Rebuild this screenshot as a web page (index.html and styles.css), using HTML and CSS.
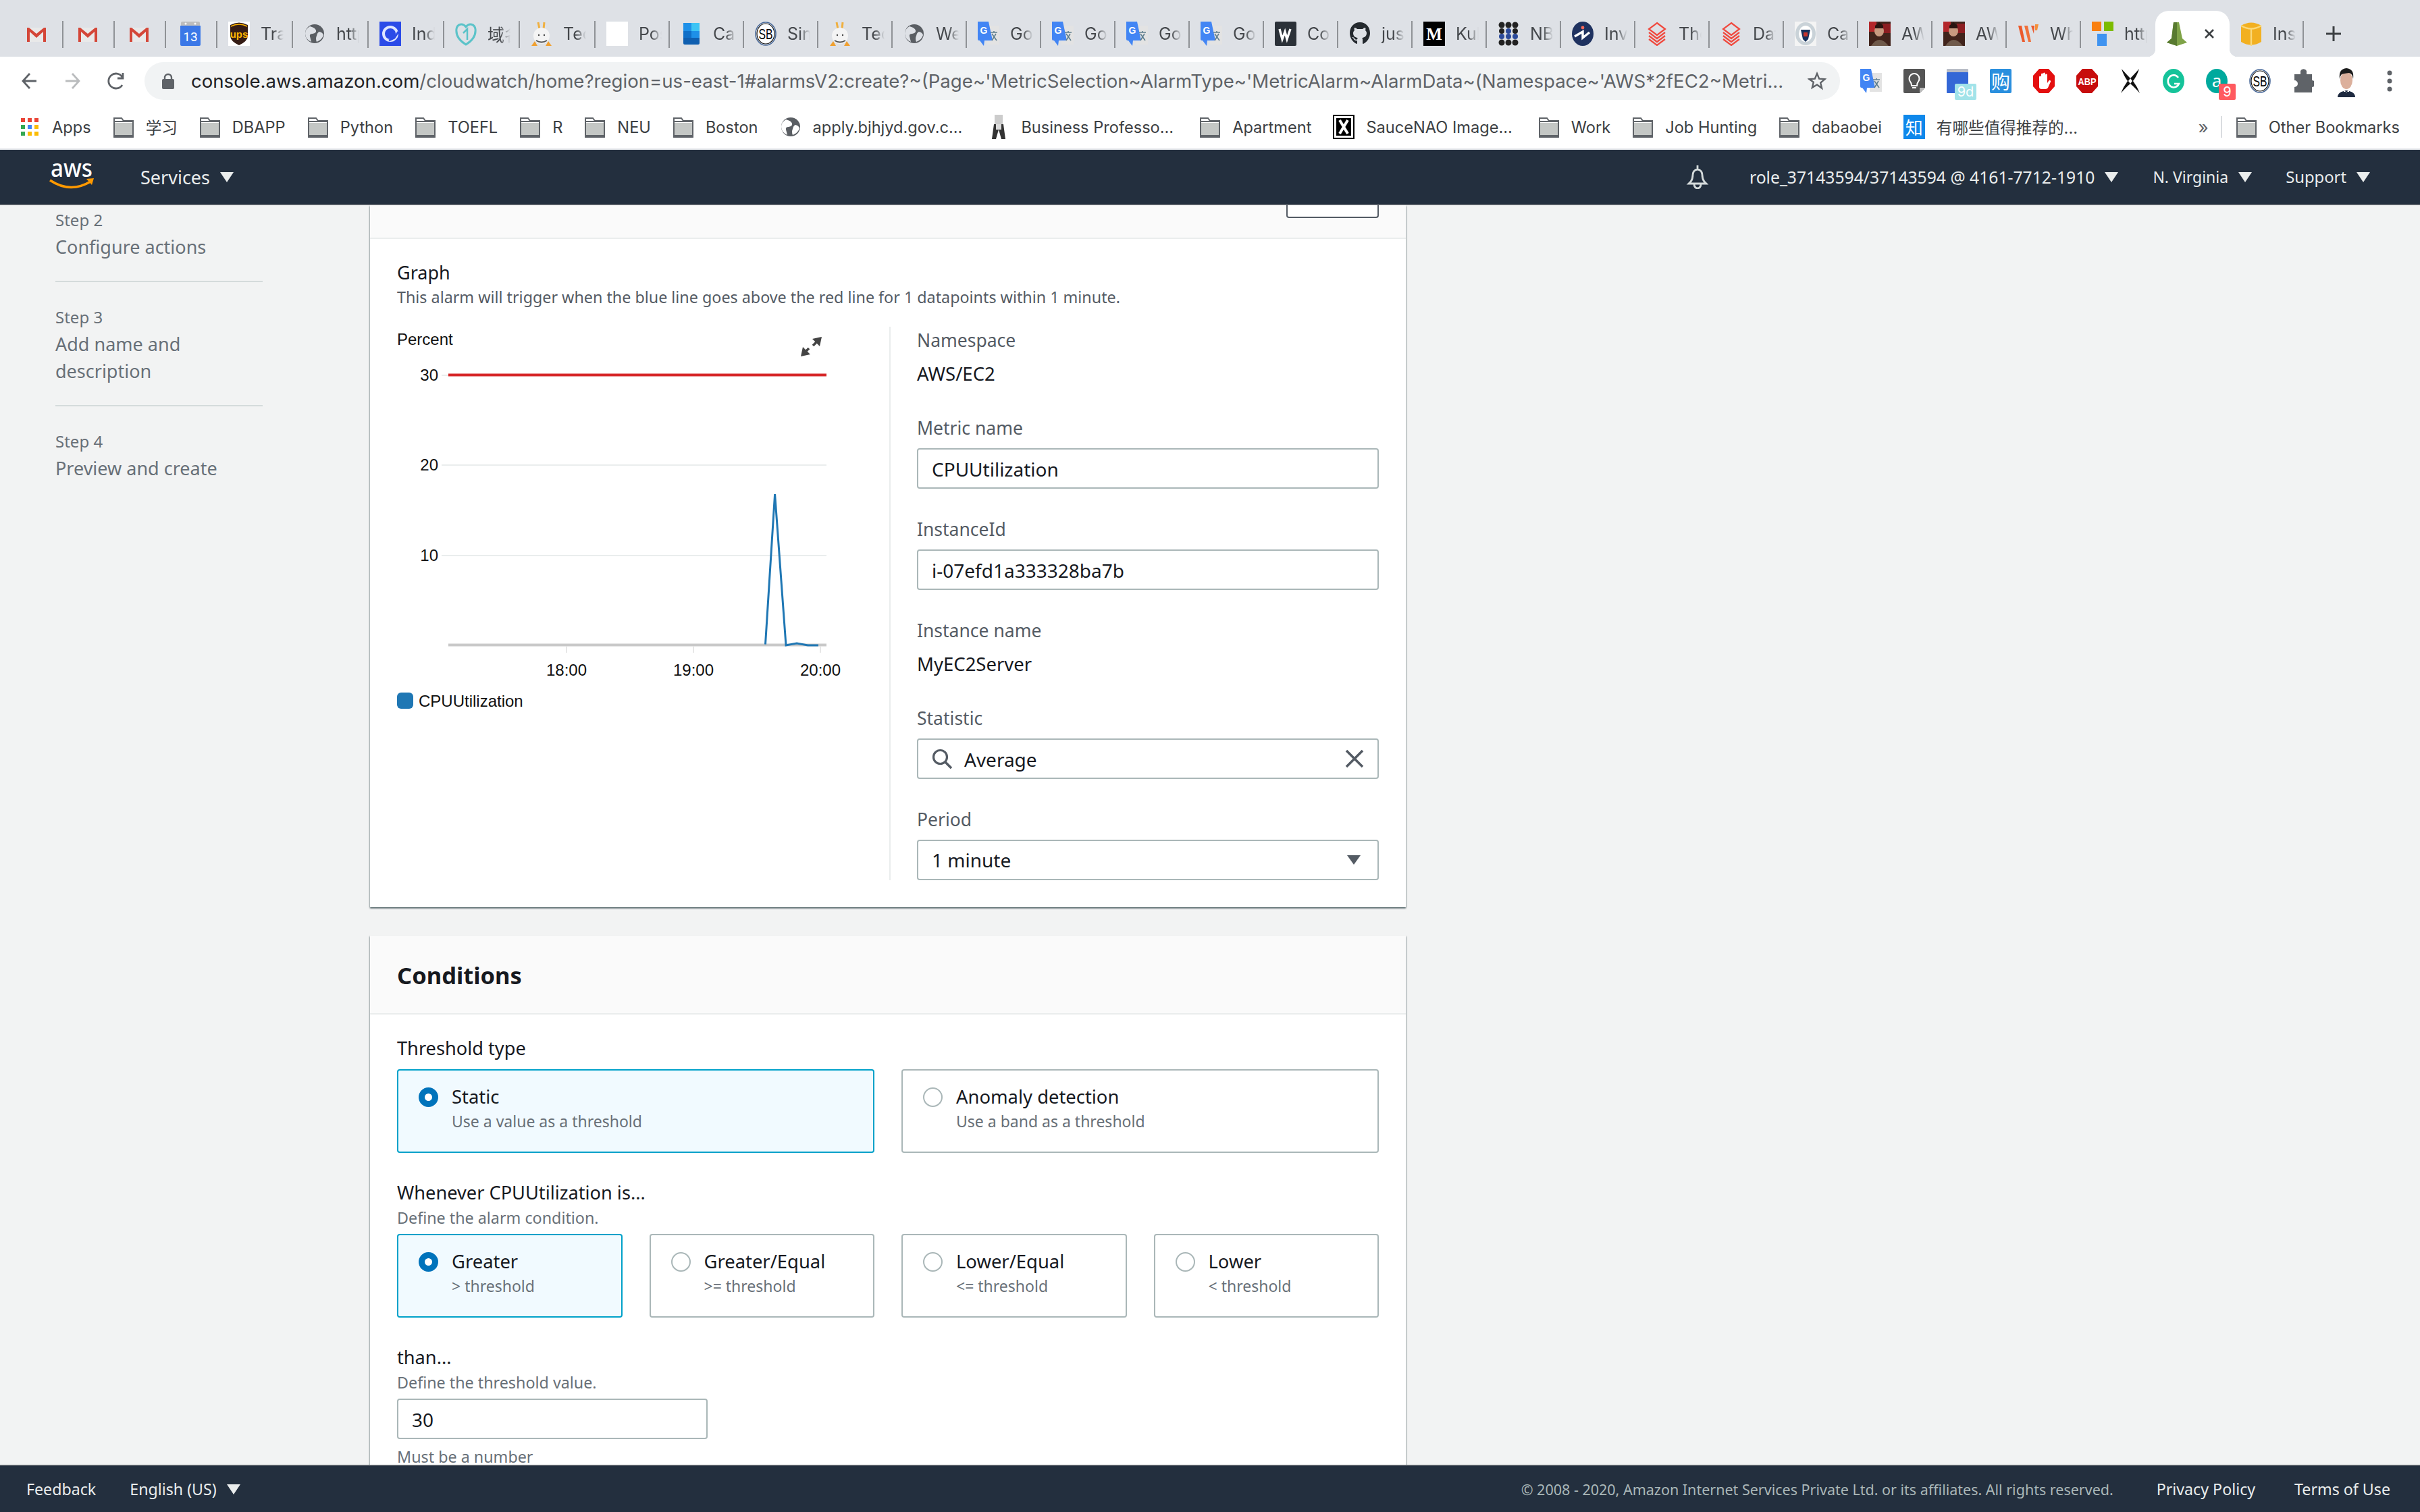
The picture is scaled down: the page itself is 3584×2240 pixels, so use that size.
FILE: index.html
```html
<!DOCTYPE html>
<html lang="en">
<head>
<meta charset="utf-8">
<title>CloudWatch</title>
<link rel="stylesheet" href="styles.css">
</head>
<body>
<svg class="defs" width="0" height="0">
  <symbol id="gmail" viewBox="0 0 32 32"><path d="M2 7h28v21H2z" fill="#e9e9e9"/><path d="M2 28V7h3l11 9 11-9h3v21h-4V13L16 22 6 13v15z" fill="#d44638"/></symbol>
  <symbol id="cal" viewBox="0 0 32 36"><rect x="2" y="0" width="28" height="8" rx="2" fill="#bdbdbd"/><path d="M1 6h30v28a2 2 0 0 1-2 2H3a2 2 0 0 1-2-2z" fill="#3b78e7"/><circle cx="9" cy="3" r="1.5" fill="#fff"/><circle cx="23" cy="3" r="1.5" fill="#fff"/><text x="16" y="29" font-size="19" text-anchor="middle" fill="#fff" font-family="Roboto">13</text></symbol>
  <symbol id="ups" viewBox="0 0 32 36"><rect width="32" height="36" fill="#fff"/><path d="M3 5q13-7 26 0v16q0 8-13 14Q3 29 3 21z" fill="#351c15"/><path d="M4 7q12-6 24 0" stroke="#ffb500" stroke-width="1.5" fill="none"/><text x="16" y="24" font-size="15" font-weight="700" text-anchor="middle" fill="#ffb500" font-family="Liberation Sans">ups</text></symbol>
  <symbol id="globe" viewBox="0 0 32 32"><circle cx="16" cy="16" r="14" fill="#5a5e63"/><path d="M9 5q8 2 9 6t-5 5q-5 0-4 4l2 8q-9-4-9-12 0-7 7-11zM23 13q5 1 6 5-2 7-10 10-2-5 0-9 1-5 4-6z" fill="#dee1e6"/></symbol>
  <symbol id="globew" viewBox="0 0 32 32"><circle cx="16" cy="16" r="14" fill="#5a5e63"/><path d="M9 5q8 2 9 6t-5 5q-5 0-4 4l2 8q-9-4-9-12 0-7 7-11zM23 13q5 1 6 5-2 7-10 10-2-5 0-9 1-5 4-6z" fill="#fff"/></symbol>
  <symbol id="index" viewBox="0 0 32 36"><rect width="32" height="36" fill="#2b4be8"/><circle cx="16" cy="18" r="10" fill="none" stroke="#dfe6ff" stroke-width="4"/><path d="M14 28l8-4 6-9" stroke="#2b4be8" stroke-width="3" fill="none"/></symbol>
  <symbol id="heart" viewBox="0 0 32 36"><path d="M16 34C6 28 1 20 2 11 3 4 11 1 16 8c5-7 13-4 14 3 1 9-4 17-14 23z" fill="none" stroke="#5cc3c9" stroke-width="3"/><path d="M12 17l6-6v16" fill="none" stroke="#5cc3c9" stroke-width="2.5"/></symbol>
  <symbol id="rabbit" viewBox="0 0 32 36"><path d="M11 1l2 10M20 1l-1 10" stroke="#f0b040" stroke-width="3"/><ellipse cx="16" cy="21" rx="12" ry="12" fill="#f4f4f4"/><path d="M1 36l5-7 4 7zM31 36l-5-7-4 7z" fill="#f0a030"/><path d="M8 28q8 5 16 0" stroke="#555" stroke-width="2" fill="none"/><circle cx="12" cy="20" r="1.2" fill="#444"/><circle cx="20" cy="20" r="1.2" fill="#444"/></symbol>
  <symbol id="blank" viewBox="0 0 32 36"><rect width="32" height="36" fill="#fff"/></symbol>
  <symbol id="office" viewBox="0 0 32 36"><rect x="4" y="2" width="24" height="32" rx="2" fill="#0f5fb0"/><rect x="4" y="2" width="12" height="12" fill="#1e90e8"/><rect x="16" y="2" width="12" height="12" fill="#3ec4f4"/><rect x="16" y="14" width="12" height="10" fill="#1e90e8"/><rect x="4" y="14" width="12" height="10" fill="#0f6fc8"/></symbol>
  <symbol id="sb" viewBox="0 0 32 36"><ellipse cx="16" cy="18" rx="15" ry="17" fill="#fff" stroke="#4a6a9a" stroke-width="1.6"/><ellipse cx="16" cy="18" rx="13" ry="15" fill="none" stroke="#111" stroke-width="1.2"/><text x="16" y="26" font-size="22" text-anchor="middle" fill="#000" font-family="Liberation Sans" textLength="21" lengthAdjust="spacingAndGlyphs">SB</text></symbol>
  <symbol id="gtrans" viewBox="0 0 32 36"><path d="M14 6h18v28H14z" fill="#e3e3e3"/><path d="M0 0h16l6 28H10l-1 8-6-8H2a2 2 0 0 1-2-2z" fill="#4285f4"/><text x="9" y="18" font-size="14" font-weight="700" text-anchor="middle" fill="#fff" font-family="Liberation Sans">G</text><path d="M19 16h10M24 14v2M21 28l6-10M21 18l7 10" stroke="#5f7f8f" stroke-width="1.6" fill="none"/></symbol>
  <symbol id="wolf" viewBox="0 0 32 36"><rect width="32" height="36" rx="2" fill="#2b3138"/><path d="M7 11l4 15 4-11 3 11 5-15" fill="none" stroke="#fff" stroke-width="3.4"/></symbol>
  <symbol id="github" viewBox="0 0 32 36"><path d="M16 1C7 1 1 8 1 17c0 7 4 13 10 16 1 0 1-1 1-1v-4c-4 1-5-2-5-2-1-2-2-2-2-2-1-1 0-1 0-1 2 0 3 2 3 2 1 2 3 2 4 1 0-1 1-2 1-2-3 0-7-2-7-7 0-2 1-3 2-4 0-1-1-2 0-4 0 0 2 0 4 2h8c2-2 4-2 4-2 1 2 0 3 0 4 1 1 2 2 2 4 0 5-4 7-7 7 1 1 1 2 1 3v5s0 1 1 1c6-3 10-9 10-16 0-9-6-16-15-16z" fill="#24292e"/></symbol>
  <symbol id="medium" viewBox="0 0 32 36"><rect width="32" height="36" fill="#000"/><text x="16" y="27" font-size="25" font-weight="700" text-anchor="middle" fill="#fff" font-family="Liberation Serif">M</text></symbol>
  <symbol id="dots" viewBox="0 0 32 36"><g fill="#222"><circle cx="6" cy="5" r="4.5"/><circle cx="16" cy="5" r="4.5"/><circle cx="26" cy="5" r="4.5"/><circle cx="6" cy="31" r="4.5"/><circle cx="16" cy="31" r="4.5"/><circle cx="26" cy="31" r="4.5"/><circle cx="6" cy="14" r="4"/><circle cx="26" cy="14" r="4"/></g><g fill="#2b4a9a"><circle cx="16" cy="14" r="4"/><circle cx="6" cy="22" r="4"/><circle cx="16" cy="22" r="4"/><circle cx="26" cy="22" r="4"/></g></symbol>
  <symbol id="inv" viewBox="0 0 32 36"><ellipse cx="16" cy="18" rx="16" ry="18" fill="#1f3260"/><path d="M4 22l12-7v9l10-8" fill="none" stroke="#fff" stroke-width="3.4"/><circle cx="16" cy="9" r="2.4" fill="#ff6a5a"/></symbol>
  <symbol id="stack" viewBox="0 0 32 36"><g fill="none" stroke="#f0493e" stroke-width="2.2"><path d="M16 2l12 9-12 9-12-9z"/><path d="M4 16l12 9 12-9"/><path d="M4 21l12 9 12-9"/><path d="M4 26l12 9 12-9"/></g></symbol>
  <symbol id="seal" viewBox="0 0 32 36"><rect width="32" height="36" fill="#f4f4f4"/><ellipse cx="16" cy="18" rx="15" ry="17" fill="#c9d2d8"/><ellipse cx="16" cy="18" rx="10" ry="12" fill="#fff"/><path d="M9 12h14l-3 14-4 4-4-4z" fill="#16325c"/><path d="M13 16h6v6h-6z" fill="#c8342c"/></symbol>
  <symbol id="game" viewBox="0 0 32 36"><rect width="32" height="36" fill="#41241c"/><rect width="11" height="15" fill="#b3262a"/><rect x="20" y="3" width="12" height="14" fill="#8c1e22"/><ellipse cx="15" cy="14" rx="7" ry="8" fill="#c79a80"/><path d="M3 36q12-18 26 0z" fill="#6f5a4b"/><path d="M9 6l6-5 6 5v4H9z" fill="#2a1410"/></symbol>
  <symbol id="wh" viewBox="0 0 32 36"><g fill="#ec5a2c"><path d="M1 6h5l5 24h-4z"/><path d="M10 6h5l5 24h-4z" fill="#f0703a"/><path d="M20 6h5l-1 12z"/><path d="M26 4h5l-2 9h-3z" fill="#f58f3a"/></g></symbol>
  <symbol id="ms" viewBox="0 0 32 36"><rect width="14" height="14" fill="#f97f0f"/><rect x="18" width="14" height="14" fill="#7cbb00"/><rect x="8" y="18" width="14" height="18" fill="#3f93f0"/></symbol>
  <symbol id="cw" viewBox="0 0 32 36"><path d="M11 1h8l5 24 7 6-15 5-15-5 7-6z" fill="#7fa348"/><path d="M11 1h5v35L1 31l7-6z" fill="#587a30"/></symbol>
  <symbol id="box" viewBox="0 0 32 36"><path d="M1 6q15-9 30 0v24q-15 9-30 0z" fill="#f2b021"/><path d="M1 6q15 9 30 0M16 11v25" stroke="#fbd97a" stroke-width="2.4" fill="none"/></symbol>
  <symbol id="folder" viewBox="0 0 32 32"><path d="M2 8V3h11l3 4h14v24a1 1 0 0 1-1 1H3a1 1 0 0 1-1-1z" fill="#fff" stroke="#5f6368" stroke-width="2"/><path d="M3 10h26v19H3z" fill="#c4c7c5"/><path d="M2 28h28v4H2z" fill="#5f6368"/><path d="M2 8h28" stroke="#5f6368" stroke-width="2"/></symbol>
  <symbol id="octa" viewBox="0 0 32 36"><path d="M9 0h14l9 10v16l-9 10H9L0 26V10z"/></symbol>
</svg>

<header class="tabstrip">
  <div class="tab pinned"><svg class="fav"><use href="#gmail"/></svg></div>
  <div class="tab pinned"><svg class="fav"><use href="#gmail"/></svg></div>
  <div class="tab pinned"><svg class="fav"><use href="#gmail"/></svg></div>
  <div class="tab pinned"><svg class="fav"><use href="#cal"/></svg></div>
  <div class="tab wide"><svg class="fav"><use href="#ups"/></svg><span class="title">Tracking</span></div>
  <div class="tab wide"><svg class="fav"><use href="#globe"/></svg><span class="title">https</span></div>
  <div class="tab wide"><svg class="fav"><use href="#index"/></svg><span class="title">Index</span></div>
  <div class="tab wide"><svg class="fav"><use href="#heart"/></svg><span class="title">域名注册</span></div>
  <div class="tab wide"><svg class="fav"><use href="#rabbit"/></svg><span class="title">Tech</span></div>
  <div class="tab"><svg class="fav"><use href="#blank"/></svg><span class="title">Post</span></div>
  <div class="tab"><svg class="fav"><use href="#office"/></svg><span class="title">Cal</span></div>
  <div class="tab"><svg class="fav"><use href="#sb"/></svg><span class="title">Single</span></div>
  <div class="tab"><svg class="fav"><use href="#rabbit"/></svg><span class="title">Tech</span></div>
  <div class="tab"><svg class="fav"><use href="#globe"/></svg><span class="title">Web</span></div>
  <div class="tab"><svg class="fav"><use href="#gtrans"/></svg><span class="title">Google</span></div>
  <div class="tab"><svg class="fav"><use href="#gtrans"/></svg><span class="title">Google</span></div>
  <div class="tab"><svg class="fav"><use href="#gtrans"/></svg><span class="title">Google</span></div>
  <div class="tab"><svg class="fav"><use href="#gtrans"/></svg><span class="title">Google</span></div>
  <div class="tab"><svg class="fav"><use href="#wolf"/></svg><span class="title">Code</span></div>
  <div class="tab"><svg class="fav"><use href="#github"/></svg><span class="title">just</span></div>
  <div class="tab"><svg class="fav"><use href="#medium"/></svg><span class="title">Kube</span></div>
  <div class="tab"><svg class="fav"><use href="#dots"/></svg><span class="title">NBA</span></div>
  <div class="tab"><svg class="fav"><use href="#inv"/></svg><span class="title">Invest</span></div>
  <div class="tab"><svg class="fav"><use href="#stack"/></svg><span class="title">The</span></div>
  <div class="tab"><svg class="fav"><use href="#stack"/></svg><span class="title">Data</span></div>
  <div class="tab"><svg class="fav"><use href="#seal"/></svg><span class="title">Case</span></div>
  <div class="tab"><svg class="fav"><use href="#game"/></svg><span class="title">AWS</span></div>
  <div class="tab"><svg class="fav"><use href="#game"/></svg><span class="title">AWS</span></div>
  <div class="tab"><svg class="fav"><use href="#wh"/></svg><span class="title">What</span></div>
  <div class="tab nosep"><svg class="fav"><use href="#ms"/></svg><span class="title">https</span></div>
  <div class="tab active"><svg class="fav"><use href="#cw"/></svg><svg class="tab-close" viewBox="0 0 16 16"><path d="M2 2l12 12M14 2L2 14"/></svg></div>
  <div class="tab"><svg class="fav"><use href="#box"/></svg><span class="title">Inst</span></div>
  <svg class="newtab" viewBox="0 0 24 24"><path d="M12 1v22M1 12h22"/></svg>
</header>

<div class="toolbar">
  <svg class="navicon" viewBox="0 0 24 28"><path d="M22 14H3M12 3L2 14l10 11" class="stroke-dark"/></svg>
  <svg class="navicon fwd" viewBox="0 0 24 28"><path d="M2 14h19M12 3l10 11-10 11" class="stroke-light"/></svg>
  <svg class="navicon reload" viewBox="0 0 28 28"><path d="M23 20a11 11 0 1 1 0-12M24 2v8h-8" class="stroke-dark"/></svg>
  <div class="omnibox">
    <svg class="lock" viewBox="0 0 18 24"><path d="M4 10V7a5 5 0 0 1 10 0v3" fill="none" stroke="#5f6368" stroke-width="2.4"/><rect y="9" width="18" height="15" rx="2" fill="#5f6368"/></svg>
    <div class="url"><span class="host">console.aws.amazon.com</span>/cloudwatch/home?region=us-east-1#alarmsV2:create?~(Page~'MetricSelection~AlarmType~'MetricAlarm~AlarmData~(Namespace~'AWS*2fEC2~Metri...</div>
    <svg class="star" viewBox="0 0 28 28"><path d="M14 3l3.2 7.6 8.2.7-6.2 5.4 1.9 8L14 19.500l-7.100 4.200 1.900-8L2.600 11.300l8.200-.7z" fill="none" stroke="#5f6368" stroke-width="2.400"/></svg>
  </div>
  <div class="extensions">
    <div class="ext"><svg class="ext-ic"><use href="#gtrans"/></svg></div>
    <div class="ext"><svg class="ext-ic" viewBox="0 0 32 36"><path d="M0 2a2 2 0 0 1 2-2h28a2 2 0 0 1 2 2v26l-8 8H2a2 2 0 0 1-2-2z" fill="#555"/><path d="M24 36l8-8h-8z" fill="#bbb"/><path d="M12 25q0-4-2-6a7.500 7.500 0 1 1 12 0q-2 2-2 6zM13 28h6" fill="none" stroke="#fff" stroke-width="2"/></svg></div>
    <div class="ext"><svg class="ext-ic" viewBox="0 0 32 36"><rect y="0" width="32" height="7" rx="1" fill="#b8bcc6"/><rect y="5" width="32" height="31" rx="1" fill="#3367d6"/></svg><span class="badge badge-cyan">9d</span></div>
    <div class="ext"><span class="ext-square">购</span></div>
    <div class="ext"><svg class="ext-ic red"><use href="#octa"/></svg><svg class="ext-ic over" viewBox="0 0 32 36"><path d="M9 28V12a1.500 1.500 0 0 1 3 0v6-10a1.500 1.500 0 0 1 3 0v10-11a1.500 1.500 0 0 1 3 0v11-9a1.500 1.500 0 0 1 3 0v12l2-3a1.500 1.500 0 0 1 3 1l-4 9q-1 2-4 2h-5q-4 0-4-3z" fill="#fff"/></svg></div>
    <div class="ext"><svg class="ext-ic darkred"><use href="#octa"/></svg><svg class="ext-ic over" viewBox="0 0 32 36"><text x="16" y="24" font-size="15" font-weight="700" text-anchor="middle" fill="#fff" font-family="Liberation Sans" textLength="27" lengthAdjust="spacingAndGlyphs">ABP</text></svg></div>
    <div class="ext"><svg class="ext-ic" viewBox="0 0 32 36"><path d="M3 0q8 9 13 14Q21 9 29 0q-3 10-9 18 6 8 10 18-8-9-14-14Q10 27 2 36 6 26 12 18 6 10 3 0z" fill="#111"/><path d="M16 14l-3 4 3 4 3-4z" fill="#fff"/></svg></div>
    <div class="ext"><svg class="ext-ic" viewBox="0 0 32 36"><ellipse cx="16" cy="18" rx="16" ry="18" fill="#15c39a"/><path d="M23 13a8.500 9 0 1 0 1 9h-7" fill="none" stroke="#fff" stroke-width="2.600"/></svg></div>
    <div class="ext"><svg class="ext-ic" viewBox="0 0 32 36"><ellipse cx="16" cy="18" rx="16" ry="18" fill="#00a99d"/><text x="16" y="27" font-size="26" text-anchor="middle" fill="#fff" font-family="Noto Sans">a</text></svg><span class="badge badge-red">9</span></div>
    <div class="ext"><svg class="ext-ic"><use href="#sb"/></svg></div>
    <div class="ext"><svg class="ext-ic" viewBox="0 0 32 36"><path d="M12 3a5 5 0 0 1 9 0v5h8v9a5 5 0 1 1 0 10v8H3V27a5 5 0 0 0 0-10H3V8h9z" fill="#5f6368"/></svg></div>
    <div class="ext"><svg class="avatar" viewBox="0 0 32 44"><path d="M3 44q0-8 13-10 13 2 13 10z" fill="#1e2a40"/><ellipse cx="16" cy="19" rx="9" ry="13" fill="#dcb09c"/><path d="M6 17Q4 2 16 1q12 1 10 16-1-8-6-9-8 1-11 2-2 2-3 7z" fill="#1c1c1c"/><path d="M12 33l4 4 4-4v3h-8z" fill="#fff"/></svg></div>
    <div class="ext"><svg class="kebab" viewBox="0 0 8 32"><circle cx="4" cy="4" r="3.500"/><circle cx="4" cy="16" r="3.500"/><circle cx="4" cy="28" r="3.500"/></svg></div>
  </div>
</div>

<nav class="bookmarks">
  <a class="bm"><svg class="grid" viewBox="0 0 26 26"><g><rect width="6" height="6" fill="#ea4335"/><rect x="10" width="6" height="6" fill="#ea4335"/><rect x="20" width="6" height="6" fill="#ea4335"/><rect y="10" width="6" height="6" fill="#34a853"/><rect x="10" y="10" width="6" height="6" fill="#4285f4"/><rect x="20" y="10" width="6" height="6" fill="#fbbc05"/><rect y="20" width="6" height="6" fill="#34a853"/><rect x="10" y="20" width="6" height="6" fill="#fbbc05"/><rect x="20" y="20" width="6" height="6" fill="#fbbc05"/></g></svg>Apps</a>
  <a class="bm"><svg class="fav"><use href="#folder"/></svg>学习</a>
  <a class="bm"><svg class="fav"><use href="#folder"/></svg>DBAPP</a>
  <a class="bm"><svg class="fav"><use href="#folder"/></svg>Python</a>
  <a class="bm"><svg class="fav"><use href="#folder"/></svg>TOEFL</a>
  <a class="bm"><svg class="fav"><use href="#folder"/></svg>R</a>
  <a class="bm"><svg class="fav"><use href="#folder"/></svg>NEU</a>
  <a class="bm"><svg class="fav"><use href="#folder"/></svg>Boston</a>
  <a class="bm cut"><svg class="fav"><use href="#globew"/></svg>apply.bjhjyd.gov.c...</a>
  <a class="bm cut"><svg class="fav tall" viewBox="0 0 32 36"><rect x="10" width="12" height="14" fill="#ccc"/><path d="M9 14h14l3 22h-6l-4-14-4 14H6z" fill="#333"/><path d="M12 14h8v8h-8z" fill="#ddd"/></svg>Business Professo...</a>
  <a class="bm"><svg class="fav"><use href="#folder"/></svg>Apartment</a>
  <a class="bm cut"><svg class="fav tall" viewBox="0 0 32 36"><rect width="32" height="36" fill="#000"/><rect x="2" y="2" width="28" height="32" fill="#fff"/><rect x="5" y="5" width="22" height="26" fill="#000"/><path d="M10 8l12 20M22 8L10 28" stroke="#fff" stroke-width="4"/></svg>SauceNAO Image...</a>
  <a class="bm"><svg class="fav"><use href="#folder"/></svg>Work</a>
  <a class="bm"><svg class="fav"><use href="#folder"/></svg>Job Hunting</a>
  <a class="bm"><svg class="fav"><use href="#folder"/></svg>dabaobei</a>
  <a class="bm"><span class="zhi">知</span>有哪些值得推荐的...</a>
  <div class="bm-end">
    <span class="more">»</span>
    <span class="bm-sep"></span>
    <a class="bm"><svg class="fav"><use href="#folder"/></svg>Other Bookmarks</a>
  </div>
</nav>

<div class="console-nav">
  <svg class="aws" viewBox="0 0 68 42"><text x="33" y="21" text-anchor="middle" font-size="37" font-weight="500" fill="#fff" font-family="Noto Sans" textLength="62" lengthAdjust="spacingAndGlyphs">aws</text><path d="M1 26q30 20 60 2" fill="none" stroke="#f90" stroke-width="3.600"/><path d="M55 24l11-1-3 10z" fill="#f90"/></svg>
  <span class="nav-item services">Services<i class="caret"></i></span>
  <div class="nav-right">
    <svg class="bell" viewBox="0 0 36 36"><path d="M18 1v5M8 25q3-4 3-10a7 8 0 0 1 14 0q0 6 3 10l3 3H5zM13 29a5 6 0 0 0 10 0" fill="none" stroke="#d5dbdb" stroke-width="2.800"/></svg>
    <span class="nav-item role">role_37143594/37143594 @ 4161-7712-1910<i class="caret"></i></span>
    <span class="nav-item region">N. Virginia<i class="caret"></i></span>
    <span class="nav-item support">Support<i class="caret"></i></span>
  </div>
</div>

<main class="viewport">
  <aside class="steps">
    <div class="step"><div class="step-num">Step 2</div><div class="step-name">Configure actions</div></div>
    <div class="step"><div class="step-num">Step 3</div><div class="step-name">Add name and<br>description</div></div>
    <div class="step last"><div class="step-num">Step 4</div><div class="step-name">Preview and create</div></div>
  </aside>
  <div class="content">
    <section class="card">
      <div class="card-head clipped"><span class="cut-btn"></span></div>
      <div class="card-body">
        <h3 class="h-small">Graph</h3>
        <p class="desc">This alarm will trigger when the blue line goes above the red line for 1 datapoints within 1 minute.</p>
        <div class="metric">
          <div class="graph">
            <svg class="chart" viewBox="0 0 700 570">
              <text x="0" y="27" class="axis">Percent</text>
              <path d="M66 339h570M66 205h570" class="gridline"/>
              <path d="M66 72h10" class="gridline"/>
              <path d="M76 71.500h560" class="redline"/>
              <path d="M76 471.500h560" class="baseline"/>
              <path d="M251 473v10M439 473v10M627 473v10" class="tick"/>
              <text x="61" y="80" class="axis end">30</text>
              <text x="61" y="213" class="axis end">20</text>
              <text x="61" y="347" class="axis end">10</text>
              <text x="251" y="517" class="axis mid">18:00</text>
              <text x="439" y="517" class="axis mid">19:00</text>
              <text x="627" y="517" class="axis mid">20:00</text>
              <path d="M545.500 470.600L559.600 248 576 472 592 469 608.500 472 624 472" class="blueline"/>
              <rect x="0" y="542" width="24" height="24" rx="6" class="swatch"/>
              <text x="32" y="563" class="axis">CPUUtilization</text>
              <path d="M622 22l-6 6M604 38l6-6" class="expand"/>
              <path d="M629 15l-14 3 11 11zM598 44l3-14 11 11z" class="expand-head"/>
            </svg>
          </div>
          <div class="fields">
            <div class="field"><div class="label">Namespace</div><div class="value">AWS/EC2</div></div>
            <div class="field"><div class="label">Metric name</div><div class="input">CPUUtilization</div></div>
            <div class="field"><div class="label">InstanceId</div><div class="input">i-07efd1a333328ba7b</div></div>
            <div class="field"><div class="label">Instance name</div><div class="value">MyEC2Server</div></div>
            <div class="field"><div class="label">Statistic</div>
              <div class="input search">
                <svg class="glass" viewBox="0 0 30 30"><circle cx="12.500" cy="12.500" r="10" fill="none" stroke="#545b64" stroke-width="3.200"/><path d="M20 20l9 9" stroke="#545b64" stroke-width="3.600"/></svg>
                <span class="grow">Average</span>
                <svg class="clear" viewBox="0 0 28 28"><path d="M2 2l24 24M26 2L2 26" stroke="#545b64" stroke-width="3.600"/></svg>
              </div>
            </div>
            <div class="field last"><div class="label">Period</div><div class="input select"><span class="grow">1 minute</span><i class="sel-caret"></i></div></div>
          </div>
        </div>
      </div>
    </section>

    <section class="card conditions">
      <div class="card-head tall-head"><h2 class="h-big">Conditions</h2></div>
      <div class="card-body cond-body">
        <div class="label dark">Threshold type</div>
        <div class="tiles two">
          <div class="tile on"><span class="radio"></span><div><div class="tile-title">Static</div><div class="tile-sub">Use a value as a threshold</div></div></div>
          <div class="tile"><span class="radio"></span><div><div class="tile-title">Anomaly detection</div><div class="tile-sub">Use a band as a threshold</div></div></div>
        </div>
        <div class="label dark gapped">Whenever CPUUtilization is...</div>
        <div class="hint">Define the alarm condition.</div>
        <div class="tiles four">
          <div class="tile on"><span class="radio"></span><div><div class="tile-title">Greater</div><div class="tile-sub">&gt; threshold</div></div></div>
          <div class="tile"><span class="radio"></span><div><div class="tile-title">Greater/Equal</div><div class="tile-sub">&gt;= threshold</div></div></div>
          <div class="tile"><span class="radio"></span><div><div class="tile-title">Lower/Equal</div><div class="tile-sub">&lt;= threshold</div></div></div>
          <div class="tile"><span class="radio"></span><div><div class="tile-title">Lower</div><div class="tile-sub">&lt; threshold</div></div></div>
        </div>
        <div class="label dark gapped">than...</div>
        <div class="hint">Define the threshold value.</div>
        <div class="input threshold">30</div>
        <div class="hint after">Must be a number</div>
      </div>
    </section>
  </div>
</main>

<footer class="console-foot">
  <span class="foot-link">Feedback</span>
  <span class="foot-link lang">English (US)<i class="caret"></i></span>
  <span class="copy">© 2008 - 2020, Amazon Internet Services Private Ltd. or its affiliates. All rights reserved.</span>
  <span class="foot-link privacy">Privacy Policy</span>
  <span class="foot-link terms">Terms of Use</span>
</footer>
</body>
</html>
```

FILE: styles.css
```css
* { box-sizing: border-box; }
html, body { margin: 0; padding: 0; }
body {
  width: 3584px; height: 2240px; overflow: hidden;
  display: flex; flex-direction: column;
  font-family: "Noto Sans", sans-serif;
  background: #f2f3f3; color: #16191f;
}
.defs { position: absolute; }

/* tab strip */
.tabstrip {
  flex: none; height: 84px; background: #dee1e6;
  display: flex; align-items: flex-end; padding-left: 18px;
  font-family: Inter, "Noto Sans CJK SC", sans-serif;
}
.tab {
  flex: none; width: 110px; height: 68px; position: relative;
  display: flex; align-items: center; gap: 16px; padding-left: 16px;
}
.tab::after {
  content: ""; position: absolute; right: 0; top: 15px;
  width: 2px; height: 40px; background: #8f9296;
}
.tab.pinned { width: 76px; padding-left: 20px; }
.tab.wide { width: 112px; }
.tab.nosep::after { display: none; }
.tab.active {
  background: #fff; border-radius: 20px 20px 0 0;
}
.tab.active::before, .tab.active::after {
  content: ""; display: block; position: absolute; top: auto; bottom: 0;
  width: 12px; height: 12px; background: #fff;
}
.tab.active::before {
  left: -12px;
  -webkit-mask-image: radial-gradient(circle at 0 0, transparent 12px, #000 12.500px);
  mask-image: radial-gradient(circle at 0 0, transparent 12px, #000 12.500px);
}
.tab.active::after {
  right: -12px;
  -webkit-mask-image: radial-gradient(circle at 100% 0, transparent 12px, #000 12.500px);
  mask-image: radial-gradient(circle at 100% 0, transparent 12px, #000 12.500px);
}
.fav { width: 32px; height: 36px; flex: none; }
.title {
  width: 34px; overflow: hidden; white-space: nowrap;
  font-size: 25px; color: #45484c;
  -webkit-mask-image: linear-gradient(90deg, #000 55%, transparent);
  mask-image: linear-gradient(90deg, #000 55%, transparent);
}
.tab-close {
  width: 16px; height: 20px; margin-left: 8px;
  stroke: #3c4043; stroke-width: 2.6; fill: none;
}
.newtab { width: 24px; height: 24px; margin-left: 32px; margin-bottom: 22px; stroke: #3c4043; stroke-width: 3; fill: none; }

/* toolbar */
.toolbar {
  flex: none; height: 64px; background: #fff; padding-top: 8px;
  display: flex; align-items: flex-start;
  font-family: Inter, sans-serif;
}
.navicon { width: 24px; height: 28px; margin: 14px 0 0 32px; flex: none; }
.navicon.fwd { margin-left: 39px; }
.navicon.reload { width: 28px; margin-left: 39px; }
.stroke-dark, .stroke-light { fill: none; stroke-width: 2.8; }
.stroke-dark { stroke: #5f6368; }
.stroke-light { stroke: #babcbe; }
.omnibox {
  width: 2511px; height: 56px; margin-left: 28px; border-radius: 28px;
  background: #f1f3f4; display: flex; align-items: center; padding-left: 26px;
  flex: none;
}
.lock { width: 18px; height: 24px; flex: none; }
.url {
  width: 2362px; margin-left: 25px; white-space: nowrap; overflow: hidden;
  font-size: 27.6px; color: #5f6368;
}
.host { color: #202124; }
.star { width: 28px; height: 28px; margin-left: 32px; flex: none; }
.extensions { display: flex; margin-left: 14px; }
.ext { width: 64px; height: 56px; position: relative; display: flex; justify-content: center; align-items: center; }
.ext-ic { width: 32px; height: 36px; }
.ext-ic.red { fill: #e40f0f; }
.ext-ic.darkred { fill: #c70d0d; }
.ext-ic.over { position: absolute; left: 16px; top: 10px; }
.ext-square {
  width: 32px; height: 36px; background: #2a8fde; color: #fff; border-radius: 2px;
  font: 28px/36px "Noto Sans CJK SC", sans-serif; text-align: center;
}
.badge {
  position: absolute; top: 32px; height: 24px; border-radius: 2px; color: #fff;
  font: 20px/24px Inter, sans-serif; text-align: center;
}
.badge-cyan { left: 28px; width: 32px; background: #a2e3e9; }
.badge-red { left: 35px; width: 25px; background: #ff5a5f; }
.avatar { width: 32px; height: 44px; margin-top: 4px; }
.kebab { width: 8px; height: 32px; fill: #5f6368; }

/* bookmarks */
.bookmarks {
  flex: none; height: 74px; background: #fff; border-bottom: 2px solid #dee1e6;
  display: flex; align-items: center; padding: 8px 30px 0 31px; gap: 32px;
  font: 23.6px Inter, "Noto Sans CJK SC", sans-serif; color: #3c4043;
}
.bm { display: flex; align-items: center; gap: 17px; white-space: nowrap; }
.bm.cut { margin-right: 6px; }
.bm .fav { height: 32px; }
.bm .fav.tall { height: 36px; }
.grid { width: 26px; height: 26px; flex: none; margin-right: 3px; }
.zhi {
  width: 32px; height: 36px; background: #0f88eb; color: #fff; flex: none;
  font: 26px/36px "Noto Sans CJK SC", sans-serif; text-align: center;
}
.bm-end { margin-left: auto; display: flex; align-items: center; }
.more { font-size: 26px; color: #5f6368; margin-right: 18px; }
.bm-sep { width: 2px; height: 32px; background: #dadce0; margin-right: 20px; }

/* console nav */
.console-nav {
  flex: none; height: 82px; background: #232f3e; border-bottom: 2px solid #545b64;
  display: flex; align-items: center; padding-left: 73px; color: #eaeded;
  font-size: 24.7px;
}
.aws { width: 68px; height: 42px; flex: none; margin-right: 67px; }
.nav-item { display: flex; align-items: center; white-space: nowrap; }
.services { font-size: 27px; }
.caret {
  width: 0; height: 0; margin-left: 15px;
  border-left: 10px solid transparent; border-right: 10px solid transparent;
  border-top: 15px solid #eaeded;
}
.nav-right { margin-left: auto; display: flex; align-items: center; padding-right: 74px; }
.bell { width: 36px; height: 36px; margin-right: 59px; }
.region { margin-left: 51px; font-size: 23px; }
.support { margin-left: 50px; font-size: 23.8px; }

/* body */
.viewport { flex: 1; min-height: 0; overflow: hidden; display: flex; }
.steps { width: 548px; flex: none; padding: 6px 159px 0 82px; color: #687078; }
.step { border-bottom: 2px solid #d5dbdb; padding-bottom: 30px; margin-bottom: 36px; }
.step.last { border: 0; }
.step-num { font-size: 24px; line-height: 32px; margin-bottom: 4px; }
.step-name { font-size: 27px; line-height: 40px; }
.content { width: 1534px; flex: none; }
.card {
  background: #fff;
  box-shadow: 0 2px 2px rgba(0,28,36,.45), 1px 1px 2px rgba(0,28,36,.2), -1px 1px 2px rgba(0,28,36,.2);
}
.card-head { background: #fafafa; border-bottom: 2px solid #eaeded; }
.clipped { height: 50px; display: flex; justify-content: flex-end; padding-right: 40px; }
.cut-btn {
  width: 137px; height: 19px; background: #fff;
  border: 2px solid #545b64; border-top: 0; border-radius: 0 0 4px 4px;
}
.card-body { padding: 32px 40px 40px; }
.h-small { margin: 0; font-weight: 400; font-size: 27px; line-height: 36px; }
.desc { margin: 2px 0 28px; font-size: 23.3px; line-height: 32px; color: #545b64; }
.metric { display: flex; }
.graph { width: 729px; flex: none; }
.chart { display: block; width: 700px; height: 570px; }
.axis { font: 24px "Liberation Sans", sans-serif; fill: #111; }
.end { text-anchor: end; }
.mid { text-anchor: middle; }
.gridline { stroke: #eaeded; stroke-width: 2; fill: none; }
.redline { stroke: #d62728; stroke-width: 4; fill: none; }
.baseline { stroke: #c9c9c9; stroke-width: 4; fill: none; }
.tick { stroke: #e0e0e0; stroke-width: 1.5; fill: none; }
.blueline { stroke: #1f77b4; stroke-width: 3; fill: none; }
.swatch { fill: #1f77b4; }
.expand { stroke: #444; stroke-width: 3.6; fill: none; }
.expand-head { fill: #444; }
.fields { flex: 1; border-left: 2px solid #eaeded; padding-left: 39px; }
.field { margin-bottom: 40px; }
.field.last { margin-bottom: 0; }
.label { font-size: 26.5px; line-height: 40px; margin-bottom: 10px; color: #545b64; }
.value { font-size: 27.5px; line-height: 40px; }
.input {
  height: 60px; border: 2px solid #aab7b8; border-radius: 4px; background: #fff;
  display: flex; align-items: center; padding: 2px 20px 0; font-size: 28px;
}
.input.select { padding-top: 0; }
.search { gap: 18px; }
.glass { width: 30px; height: 30px; flex: none; margin-top: -2px; }
.clear { width: 28px; height: 28px; flex: none; margin: -2px 0 0; }
.grow { flex: 1; }
.sel-caret {
  width: 0; height: 0; margin: 0 5px 0 0;
  border-left: 10px solid transparent; border-right: 10px solid transparent;
  border-top: 14px solid #545b64;
}

.conditions { margin-top: 42px; }
.tall-head { height: 117px; padding: 36px 40px 0; }
.h-big { margin: 0; font-size: 34.5px; line-height: 46px; font-weight: 700; }
.cond-body { padding-top: 30px; }
.dark { color: #16191f; font-size: 27.2px; }
.cond-body > .label:first-child { margin-bottom: 11px; }
.gapped { margin: 39px 0 1px; }
.hint { font-size: 23.3px; line-height: 32px; color: #687078; margin-bottom: 8px; }
.hint.after { margin: 10px 0 0; }
.tiles { display: grid; gap: 40px; }
.two { grid-template-columns: 1fr 1fr; }
.four { grid-template-columns: repeat(4, 1fr); }
.tile {
  height: 124px; border: 2px solid #aab7b8; border-radius: 4px; background: #fff;
  display: flex; gap: 20px; padding: 19px 0 0 30px;
}
.tile.on { border-color: #00a1c9; background: #f1faff; }
.radio {
  width: 29px; height: 29px; border-radius: 50%; border: 2px solid #aab7b8;
  background: #fff; flex: none; margin-top: 6px;
}
.on .radio { border: 9px solid #0073bb; }
.tile-title { font-size: 27.4px; line-height: 40px; }
.tile-sub { font-size: 23px; line-height: 32px; color: #687078; }
.threshold { width: 460px; }

/* footer */
.console-foot {
  flex: none; height: 70px; background: #232f3e; border-top: 2px solid #545b64;
  display: flex; align-items: center; padding: 0 44px 0 39px; font-size: 23.2px; color: #eaeded;
}
.foot-link { display: flex; align-items: center; white-space: nowrap; }
.lang { margin-left: 50px; }
.copy { margin-left: auto; color: #aab7b8; font-size: 21.5px; }
.privacy { margin-left: 64px; }
.terms { margin-left: 58px; }
```
